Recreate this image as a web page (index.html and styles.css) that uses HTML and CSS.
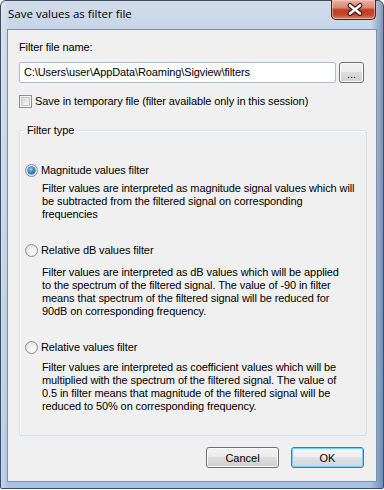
FILE: index.html
```html
<!DOCTYPE html>
<html lang="en">
<head>
  <meta charset="UTF-8">
  <title>Save values as filter file</title>
  <link rel="stylesheet" href="styles.css">
</head>
<body>

  <div class="window">
    <!-- Barra de título -->
    <div class="titlebar">
      <span class="title">Save values as filter file</span>
      <button class="close" title="Close">
        <svg width="45" height="19" viewBox="0 0 45 19">
          <path d="M19 5.5 L29 13.5 M29 5.5 L19 13.5" stroke="#3d1a14" stroke-width="5" stroke-linecap="round"/>
          <path d="M19 5.5 L29 13.5 M29 5.5 L19 13.5" stroke="#ffffff" stroke-width="2.6" stroke-linecap="round"/>
        </svg>
      </button>
    </div>

    <div class="client">
      <label class="field-label" for="path">Filter file name:</label>
      <div class="path-row">
        <input id="path" class="textbox" type="text" value="C:\Users\user\AppData\Roaming\Sigview\filters">
        <button class="btn btn-browse">...</button>
      </div>

      <label class="check-row">
        <span class="checkbox"></span>Save in temporary file (filter available only in this session)
      </label>

      <!-- Tipo de filtro -->
      <fieldset class="group">
        <legend>Filter type</legend>

        <div class="option option-1">
          <label class="radio-row"><span class="radio checked"></span>Magnitude values filter</label>
          <p class="desc">Filter values are interpreted as magnitude signal values which will<br>be subtracted from the filtered signal on corresponding<br>frequencies</p>
        </div>

        <div class="option option-2">
          <label class="radio-row"><span class="radio"></span>Relative dB values filter</label>
          <p class="desc">Filter values are interpreted as dB values which will be applied<br>to the spectrum of the filtered signal. The value of -90 in filter<br>means that spectrum of the filtered signal will be reduced for<br>90dB on corresponding frequency.</p>
        </div>

        <div class="option option-3">
          <label class="radio-row"><span class="radio"></span>Relative values filter</label>
          <p class="desc">Filter values are interpreted as coefficient values which will be<br>multiplied with the spectrum of the filtered signal. The value of<br>0.5 in filter means that magnitude of the filtered signal will be<br>reduced to 50% on corresponding frequency.</p>
        </div>
      </fieldset>

      <div class="buttons">
        <button class="btn btn-dialog">Cancel</button>
        <button class="btn btn-dialog btn-default">OK</button>
      </div>
    </div>
  </div>

</body>
</html>
```

FILE: styles.css
```css
/* Geral */
body {
  margin: 0;
  width: 384px;
  height: 490px;
  background-color: #ffffff;
  font-family: "Liberation Sans", Arial, sans-serif;
  font-size: 11px;
  letter-spacing: -0.1px;
  color: #000;
  overflow: hidden;
}

/* Moldura da janela (estilo Aero) */
.window {
  box-sizing: border-box;
  width: 384px;
  height: 489px;
  border: 1px solid #3f4d60;
  border-radius: 6px 6px 2px 2px;
  padding: 0 6px 6px 6px;
  background:
    linear-gradient(to right, rgba(255,255,255,0.35) 0, rgba(255,255,255,0) 8px, rgba(255,255,255,0) 370px, rgba(40,70,120,0.45) 100%),
    linear-gradient(to bottom, #d3dde9 0, #c6d5e7 28px, #b3c9e3 60%, #a6c1e4 100%);
}

.titlebar {
  display: flex;
  align-items: flex-start;
  height: 28px;
}

.title {
  margin: 5px 0 0 1px;
  font-family: "Open Sans", "Noto Sans", sans-serif;
  font-size: 11.5px;
  letter-spacing: 0;
  line-height: 15px;
  color: #000;
}

/* Botão fechar vermelho */
.close {
  margin: -1px 1px 0 auto;
  padding: 0;
  width: 45px;
  height: 20px;
  border: 1px solid #4d2119;
  border-top: none;
  border-radius: 0 0 5px 5px;
  background: linear-gradient(#e8b2a5 0%, #d98775 40%, #c13c22 52%, #c6452b 78%, #dd8a6e 100%);
  box-shadow: inset 0 0 0 1px rgba(255,210,200,0.55);
  display: block;
}
.close svg {
  display: block;
  margin: -1px 0 0 -1px;
}

/* Área cliente */
.client {
  box-sizing: border-box;
  height: 453px;
  border: 1px solid #7f90a6;
  background-color: #f0f0f0;
  padding: 11px 12px 0 11px;
}

.field-label {
  display: block;
  line-height: 13px;
}

.path-row {
  display: flex;
  gap: 3px;
  margin-top: 8px;
}

.textbox {
  box-sizing: border-box;
  width: 317px;
  height: 21px;
  margin: 0;
  padding: 0 4px 2px 4px;
  border: 1px solid #a9bdd5;
  border-radius: 2px;
  background: #fff;
  font-family: "Liberation Sans", Arial, sans-serif;
  font-size: 11px;
  letter-spacing: -0.1px;
  color: #000;
  outline: none;
}

/* Botões padrão do Windows 7 */
.btn {
  box-sizing: border-box;
  margin: 0;
  padding: 0;
  border: 1px solid #707070;
  border-radius: 3px;
  background: linear-gradient(#f2f2f2 0%, #ebebeb 50%, #dddddd 50%, #cfcfcf 100%);
  box-shadow: inset 0 0 0 1px #fbfbfb;
  font-family: "Liberation Sans", Arial, sans-serif;
  font-size: 11px;
  color: #000;
}

.btn-browse {
  width: 25px;
  height: 21px;
  padding-top: 3px;
}

.btn-dialog {
  width: 73px;
  height: 21px;
}

.btn-default {
  border-color: #3c7fb1;
  box-shadow: inset 0 0 0 1px #6fd2f6;
  background: linear-gradient(#f4f6f8 0%, #eceef0 50%, #dfe2e4 50%, #d3d6d9 100%);
}

/* Caixa de seleção */
.check-row {
  display: flex;
  align-items: center;
  gap: 3px;
  margin-top: 12px;
  line-height: 13px;
}

.checkbox {
  box-sizing: border-box;
  width: 13px;
  height: 13px;
  border: 1px solid #8e8f8f;
  background: linear-gradient(135deg, #d0d0d0 0%, #e9e9e9 55%, #fbfbfb 100%);
  box-shadow: inset 0 0 0 1px #f4f4f4, inset 0 0 0 2px #c9c9c9;
}

/* Grupo "Filter type" */
.group {
  box-sizing: border-box;
  width: 348px;
  min-inline-size: 0;
  margin: 16px 0 0 0;
  padding: 0 5px 22px 5px;
  border: 1px solid #d5dfe5;
  border-radius: 3px;
  box-shadow: inset 1px 1px 0 #fff;
}

.group legend {
  padding: 0 2px;
  line-height: 13px;
}

.radio-row {
  display: flex;
  align-items: center;
  gap: 3px;
  line-height: 13px;
}

.radio {
  box-sizing: border-box;
  width: 13px;
  height: 13px;
  border: 1px solid #8c8c8c;
  border-radius: 50%;
  background: radial-gradient(circle at 60% 65%, #ffffff 0%, #e8e8e8 60%, #d6d6d6 100%);
  position: relative;
}

.radio.checked::after {
  content: "";
  position: absolute;
  left: 2px;
  top: 2px;
  width: 7px;
  height: 7px;
  border-radius: 50%;
  background: radial-gradient(circle at 40% 35%, #8fd8ff 0%, #2f8fd0 45%, #134a7c 100%);
  box-shadow: 0 0 0 0.5px #0e3356;
}

.desc {
  margin: 5px 0 0 17px;
  line-height: 13px;
  white-space: nowrap;
  color: #000;
}

.option-1 { margin-top: 27px; }
.option-2 { margin-top: 23px; }
.option-3 { margin-top: 23px; }
.option-2 .desc { margin-top: 9px; }
.option-3 .desc { margin-top: 7px; }

/* Botões OK / Cancel */
.buttons {
  display: flex;
  justify-content: flex-end;
  gap: 12px;
  margin-top: 11px;
}
```
